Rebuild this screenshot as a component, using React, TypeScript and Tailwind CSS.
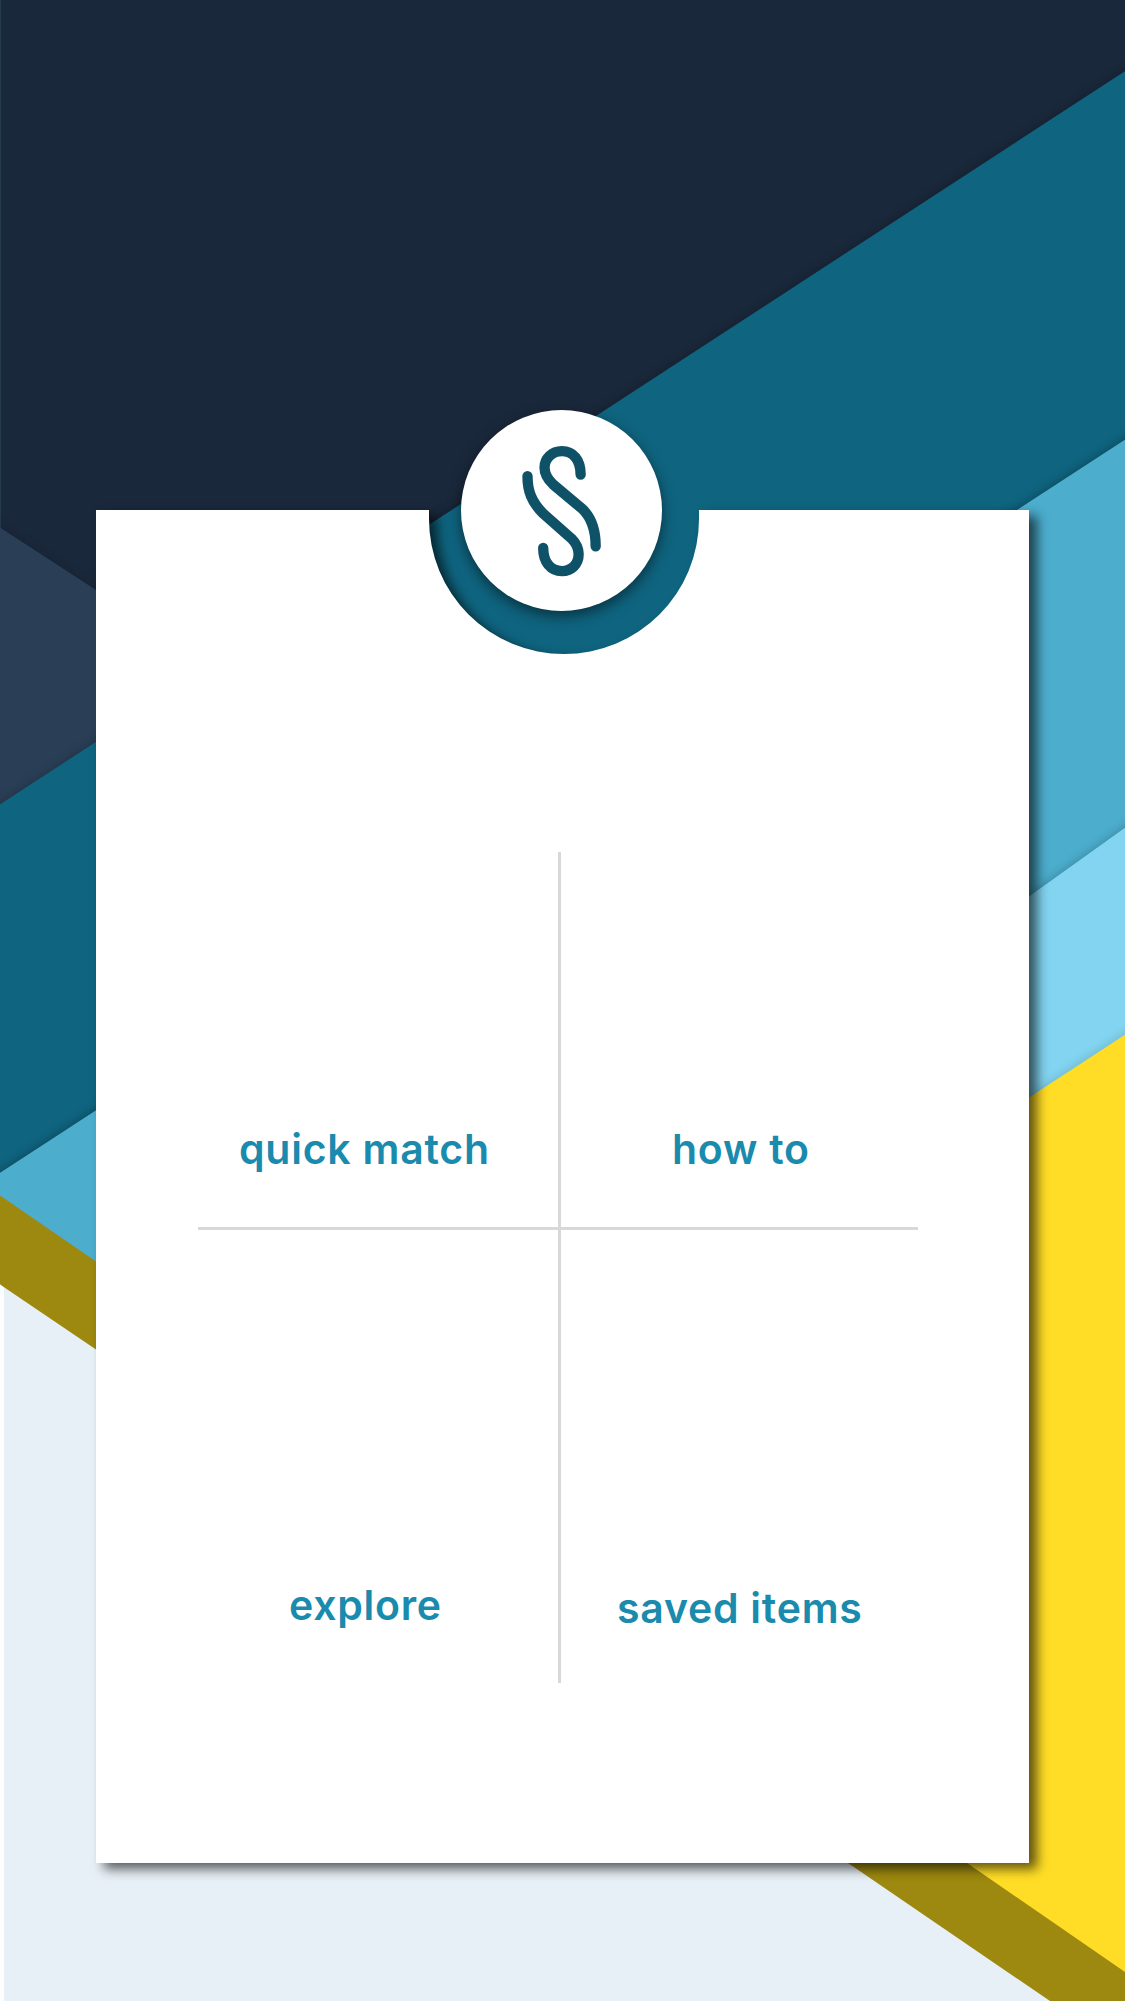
import React from "react";

function Backdrop() {
  return (
    <svg className="absolute inset-0 h-full w-full" viewBox="0 0 1125 2001" fill="none">
      <rect width="1125" height="2001" fill="#1a283b" />
      <rect width="1" height="530" fill="#253b4b" />
      <g className="[filter:drop-shadow(0_-1px_5px_rgba(0,0,0,0.12))]">
        <path d="M-40 501.500L0 527.500L96 590L300 722L-40 1000Z" fill="#2a3f56" />
      </g>
      <g className="[filter:drop-shadow(0_-1px_5px_rgba(0,0,0,0.22))]">
        <path d="M-40 830.500L1165 45V1400H-40Z" fill="#0f647f" />
      </g>
      <g className="[filter:drop-shadow(0_-1px_5px_rgba(0,0,0,0.28))]">
        <path d="M-40 1199L1165 413.500V1500H-40Z" fill="#4cadcd" />
      </g>
      <g className="[filter:drop-shadow(0_-1px_5px_rgba(0,0,0,0.22))]">
        <path d="M1165 799L900 989V1300H1165Z" fill="#82d4f0" />
      </g>
      <g className="[filter:drop-shadow(0_-1px_5px_rgba(0,0,0,0.15))]">
        <path d="M1165 1008.500L500 1444V2001H1165Z" fill="#ffdd26" />
      </g>
      <path d="M0 1195.500L96 1261.500L967 1863L1125 1972V2001H0Z" fill="#9d890f" />
      <path d="M0 1284.500L96 1349.500L848 1863L1050 2001H0Z" fill="#e7f0f6" />
      <path d="M0 1284.500L4 1287.500V2001H0Z" fill="#fbfdfe" />
    </svg>
  );
}

function Logo() {
  return (
    <div className="absolute left-[365.400px] top-[-100px] size-[200.500px] rounded-full bg-white shadow-[0_5px_14px_rgba(0,0,0,0.5)]">
      <svg
        className="h-full w-full"
        viewBox="124 60 600 600"
        fill="none"
        stroke="#0f5268"
        strokeWidth="31"
        strokeLinecap="round"
      >
        <path d="M482 253C482 207 458 183 426 183C396 183 374 206 374 232C374 256 386 270 400 283L486 355C518 385 527 425 527 468" />
        <path d="M323 258C323 302 335 335 370 370L455 445C470 460 476 475 476 492C476 522 454 542 426 542C392 542 370 515 370 473" />
      </svg>
    </div>
  );
}

function Tile({ label, className }: { label: string; className: string }) {
  return (
    <button
      className={`flex items-end whitespace-nowrap text-[41px] font-semibold leading-[52px] tracking-[0.75px] text-[#1a8aad] ${className}`}
    >
      {label}
    </button>
  );
}

export default function App() {
  return (
    <div className="relative h-[2001px] w-[1125px] overflow-hidden px-24 pt-[510px] font-['Inter',sans-serif]">
      <Backdrop />
      <main className="relative h-[1353px] w-[933px]">
        <div className="absolute inset-0 [filter:drop-shadow(8px_6px_6px_rgba(0,0,0,0.62))]">
          <div className="h-full w-full bg-white [clip-path:path('M0_0H333V9A135_135_0_0_0_603_9V0H933V1353H0Z')]" />
        </div>
        <Logo />
        <div className="relative pl-[102px] pt-[342px]">
          <nav className="relative grid h-[831px] w-[720px] grid-cols-[361px_359px] grid-rows-[377px_454px]">
            <Tile label="quick match" className="pb-[54px] pl-[41px]" />
            <Tile label="how to" className="pb-[54px] pl-[113px]" />
            <Tile label="explore" className="pb-[52px] pl-[91px]" />
            <Tile label="saved items" className="pb-[49px] pl-[58px]" />
            <span className="absolute left-[360px] top-0 h-full w-[3px] bg-[#d8d8d8]" />
            <span className="absolute left-0 top-[375px] h-[3px] w-full bg-[#d8d8d8]" />
          </nav>
        </div>
      </main>
    </div>
  );
}
